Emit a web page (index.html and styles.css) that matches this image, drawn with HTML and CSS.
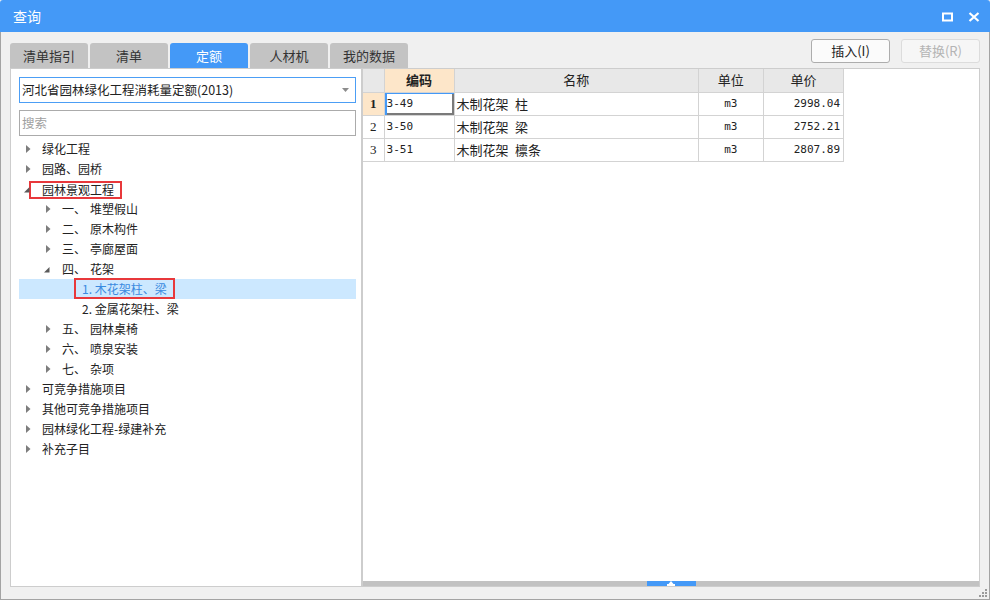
FILE: index.html
```html
<!DOCTYPE html>
<html lang="zh-CN">
<head>
<meta charset="utf-8">
<title>查询</title>
<link rel="stylesheet" href="styles.css">
</head>
<body>
<div class="window">
  <div class="titlebar">
    <span class="title">查询</span>
    <div class="tb-btns">
      <svg class="tb-icon" width="12" height="10" viewBox="0 0 12 10"><rect x="1" y="1.5" width="9" height="7" fill="none" stroke="#fff" stroke-width="2"/></svg>
      <svg class="tb-icon" width="12" height="10" viewBox="0 0 12 10"><path d="M1.5 1 L10.5 9 M10.5 1 L1.5 9" stroke="#fff" stroke-width="2.2"/></svg>
    </div>
  </div>
  <div class="main">
    <div class="toolbar">
      <div class="tabs">
        <div class="tab">清单指引</div>
        <div class="tab">清单</div>
        <div class="tab active">定额</div>
        <div class="tab">人材机</div>
        <div class="tab">我的数据</div>
      </div>
      <div class="actions">
        <button class="btn">插入(I)</button>
        <button class="btn disabled">替换(R)</button>
      </div>
    </div>
    <div class="content">
      <div class="left">
        <div class="combo">
          <span>河北省园林绿化工程消耗量定额(2013)</span>
          <svg width="7" height="4" viewBox="0 0 7 4"><path d="M0 0 L7 0 L3.5 4Z" fill="#8c8c8c"/></svg>
        </div>
        <div class="search">搜索</div>
        <div class="tree">
          <div class="row l0"><span class="tw"><svg class="closed" width="5" height="8" viewBox="0 0 5 8"><path d="M0 0 L4.5 4 L0 8Z" fill="#7d7d7d"/></svg></span><span>绿化工程</span></div>
          <div class="row l0"><span class="tw"><svg class="closed" width="5" height="8" viewBox="0 0 5 8"><path d="M0 0 L4.5 4 L0 8Z" fill="#7d7d7d"/></svg></span><span>园路、园桥</span></div>
          <div class="row l0"><span class="tw"><svg class="open" width="6" height="6" viewBox="0 0 6 6"><path d="M5.5 0 L5.5 5.5 L0 5.5Z" fill="#5a5a5a"/></svg></span><span class="mark mark-a">园林景观工程</span></div>
          <div class="row l1"><span class="tw"><svg class="closed" width="5" height="8" viewBox="0 0 5 8"><path d="M0 0 L4.5 4 L0 8Z" fill="#7d7d7d"/></svg></span><span class="num">一、</span><span>堆塑假山</span></div>
          <div class="row l1"><span class="tw"><svg class="closed" width="5" height="8" viewBox="0 0 5 8"><path d="M0 0 L4.5 4 L0 8Z" fill="#7d7d7d"/></svg></span><span class="num">二、</span><span>原木构件</span></div>
          <div class="row l1"><span class="tw"><svg class="closed" width="5" height="8" viewBox="0 0 5 8"><path d="M0 0 L4.5 4 L0 8Z" fill="#7d7d7d"/></svg></span><span class="num">三、</span><span>亭廊屋面</span></div>
          <div class="row l1"><span class="tw"><svg class="open" width="6" height="6" viewBox="0 0 6 6"><path d="M5.5 0 L5.5 5.5 L0 5.5Z" fill="#5a5a5a"/></svg></span><span class="num">四、</span><span>花架</span></div>
          <div class="row l2 selected"><span class="tw"></span><span class="mark mark-b">1. 木花架柱、梁</span></div>
          <div class="row l2"><span class="tw"></span><span>2. 金属花架柱、梁</span></div>
          <div class="row l1"><span class="tw"><svg class="closed" width="5" height="8" viewBox="0 0 5 8"><path d="M0 0 L4.5 4 L0 8Z" fill="#7d7d7d"/></svg></span><span class="num">五、</span><span>园林桌椅</span></div>
          <div class="row l1"><span class="tw"><svg class="closed" width="5" height="8" viewBox="0 0 5 8"><path d="M0 0 L4.5 4 L0 8Z" fill="#7d7d7d"/></svg></span><span class="num">六、</span><span>喷泉安装</span></div>
          <div class="row l1"><span class="tw"><svg class="closed" width="5" height="8" viewBox="0 0 5 8"><path d="M0 0 L4.5 4 L0 8Z" fill="#7d7d7d"/></svg></span><span class="num">七、</span><span>杂项</span></div>
          <div class="row l0"><span class="tw"><svg class="closed" width="5" height="8" viewBox="0 0 5 8"><path d="M0 0 L4.5 4 L0 8Z" fill="#7d7d7d"/></svg></span><span>可竞争措施项目</span></div>
          <div class="row l0"><span class="tw"><svg class="closed" width="5" height="8" viewBox="0 0 5 8"><path d="M0 0 L4.5 4 L0 8Z" fill="#7d7d7d"/></svg></span><span>其他可竞争措施项目</span></div>
          <div class="row l0"><span class="tw"><svg class="closed" width="5" height="8" viewBox="0 0 5 8"><path d="M0 0 L4.5 4 L0 8Z" fill="#7d7d7d"/></svg></span><span>园林绿化工程-绿建补充</span></div>
          <div class="row l0"><span class="tw"><svg class="closed" width="5" height="8" viewBox="0 0 5 8"><path d="M0 0 L4.5 4 L0 8Z" fill="#7d7d7d"/></svg></span><span>补充子目</span></div>
        </div>
      </div>
      <div class="right">
        <div class="grid-wrap">
          <table class="grid">
            <colgroup>
              <col class="c-idx"><col class="c-code"><col class="c-name"><col class="c-unit"><col class="c-price">
            </colgroup>
            <thead>
              <tr><th class="corner"></th><th class="hl">编码</th><th>名称</th><th>单位</th><th>单价</th></tr>
            </thead>
            <tbody>
              <tr><td class="idx hl-idx">1</td><td class="code focus">3-49</td><td class="name">木制花架&ensp;柱</td><td class="unit">m3</td><td class="price">2998.04</td></tr>
              <tr><td class="idx">2</td><td class="code">3-50</td><td class="name">木制花架&ensp;梁</td><td class="unit">m3</td><td class="price">2752.21</td></tr>
              <tr><td class="idx">3</td><td class="code">3-51</td><td class="name">木制花架&ensp;檩条</td><td class="unit">m3</td><td class="price">2807.89</td></tr>
            </tbody>
          </table>
        </div>
        <div class="hbar">
          <div class="splitter"><svg width="8" height="5" viewBox="0 0 8 5"><path d="M4 0 L6.5 3 L8 3 L8 5 L0 5 L0 3 L1.5 3Z" fill="#fff"/></svg></div>
        </div>
      </div>
    </div>
  </div>
  <svg class="grip" width="9" height="9" viewBox="0 0 9 9">
    <rect x="6" y="0" width="2" height="2" fill="#9a9a9a"/>
    <rect x="3" y="3" width="2" height="2" fill="#9a9a9a"/><rect x="6" y="3" width="2" height="2" fill="#9a9a9a"/>
    <rect x="0" y="6" width="2" height="2" fill="#9a9a9a"/><rect x="3" y="6" width="2" height="2" fill="#9a9a9a"/><rect x="6" y="6" width="2" height="2" fill="#9a9a9a"/>
  </svg>
</div>
</body>
</html>
```

FILE: styles.css
```css
* { box-sizing: border-box; }
html, body { margin: 0; padding: 0; }
body {
  font-family: "Noto Sans CJK SC", "Noto Sans", "Liberation Sans", sans-serif;
  color: #222;
  background: #f0f0f0;
}
.window {
  position: relative;
  width: 990px;
  height: 600px;
  display: flex;
  flex-direction: column;
  overflow: hidden;
  border-radius: 3px 3px 0 0;
}
.titlebar {
  height: 32px;
  flex: none;
  background: #4499f7;
  display: flex;
  align-items: center;
  padding-left: 13px;
  padding-right: 10px;
  color: #fff;
}
.title { font-size: 14px; line-height: 16px; }
.tb-btns { margin-left: auto; display: flex; gap: 14px; align-items: center; padding-top: 1px; }
.tb-icon { display: block; }

.main {
  flex: 1;
  display: flex;
  flex-direction: column;
  background: #f0f0f0;
  border: 1px solid #a3a3a3;
  border-top: none;
  padding: 0 9px 12px 9px;
}
.toolbar {
  height: 36px;
  flex: none;
  display: flex;
  align-items: flex-start;
}
.tabs { display: flex; gap: 2px; margin-top: 11px; }
.tab {
  width: 78px;
  height: 25px;
  background: #c3c3c3;
  border-radius: 3px 3px 0 0;
  font-size: 13px;
  line-height: 25px;
  text-align: center;
  color: #333;
}
.tab.active { background: #4499f7; color: #fff; }
.actions { margin-left: auto; display: flex; gap: 11px; margin-top: 7px; }
.btn {
  width: 79px;
  height: 24px;
  border: 1px solid #adadad;
  border-radius: 3px;
  background: #fbfbfb;
  font-family: inherit;
  font-size: 13px;
  line-height: 20px;
  color: #222;
  padding: 0;
}
.btn.disabled { border-color: #dcdcdc; color: #b4b4b4; background: #f6f6f6; }

.content {
  flex: 1;
  display: flex;
  min-height: 0;
}
.left {
  width: 352px;
  flex: none;
  background: #fff;
  border: 1px solid #cdcdcd;
  padding: 8px 5px 0 8px;
}
.combo {
  height: 26px;
  border: 1px solid #4c9ef5;
  display: flex;
  align-items: center;
  padding: 0 6px 0 2px;
  font-size: 12.5px;
  line-height: 16px;
  color: #222;
}
.combo svg { margin-left: auto; display: block; }
.search {
  margin-top: 7px;
  height: 26px;
  border: 1px solid #ababab;
  font-size: 12.5px;
  line-height: 24px;
  padding-left: 2px;
  color: #a0a0a0;
}
.tree { margin-top: 3px; }
.row {
  height: 20px;
  display: flex;
  align-items: center;
  font-size: 12px;
  line-height: 16px;
  white-space: nowrap;
  color: #222;
}
.row.l1 { padding-left: 20px; }
.row.l2 { padding-left: 40px; }
.row.selected { background: #cce8ff; color: #3a8ae0; }
.tw { width: 23px; flex: none; height: 20px; position: relative; display: block; }
.tw .closed { position: absolute; left: 7px; top: 6px; }
.tw .open { position: absolute; left: 5px; top: 8px; }
.num { width: 28px; flex: none; }
.mark {
  display: inline-block;
  border: 2px solid #e8383b;
}
.mark-a {
  height: 18px;
  line-height: 14px;
  padding: 0 6px 0 11px;
  margin-left: -13px;
  margin-top: 2px;
}
.mark-b {
  height: 21px;
  line-height: 17px;
  padding: 0 6px 0 6px;
  margin-left: -8px;
  margin-top: -1px;
}

.right {
  flex: 1;
  min-width: 0;
  background: #fff;
  border: 1px solid #cdcdcd;
  display: flex;
  flex-direction: column;
}
.grid-wrap { flex: 1; }
.grid {
  border-collapse: collapse;
  table-layout: fixed;
  width: 481px;
  font-size: 13px;
}
.c-idx { width: 21px; }
.c-code { width: 70px; }
.c-name { width: 244px; }
.c-unit { width: 65px; }
.c-price { width: 80px; }
.grid th, .grid td {
  border: 1px solid #d3d3d3;
  height: 23px;
  padding: 0;
  line-height: 16px;
  white-space: nowrap;
  overflow: hidden;
}
.grid tr:first-child th { border-top: none; }
.grid tr th:first-child, .grid tr td:first-child { border-left: none; }
.grid th {
  background: #e8e8e8;
  font-weight: normal;
  color: #222;
  text-align: center;
}
.grid th.hl { background: #fde6c9; font-weight: bold; }
.grid th.corner { background: #e8e8e8; }
.grid td.idx {
  text-align: center;
  font-family: "Liberation Serif", "DejaVu Serif", serif;
  font-size: 13px;
  color: #222;
}
.grid td.hl-idx { background: #fde6c9; font-weight: bold; }
.grid td.code {
  font-family: "DejaVu Sans Mono", "Liberation Mono", monospace;
  font-size: 11px;
  padding-left: 2px;
}
.grid td.focus { box-shadow: inset 2px 1px 0 #4499f7, inset -2px -2px 0 #7a7a7a; }
.grid td.name { padding-left: 2px; }
.grid td.unit {
  text-align: center;
  font-family: "DejaVu Sans Mono", "Liberation Mono", monospace;
  font-size: 11px;
}
.grid td.price {
  text-align: right;
  padding-right: 3px;
  font-family: "DejaVu Sans Mono", "Liberation Mono", monospace;
  font-size: 11px;
}
.hbar {
  height: 5px;
  flex: none;
  background: #c2c2c2;
  display: flex;
  justify-content: center;
}
.splitter {
  width: 49px;
  height: 5px;
  background: #4499f7;
  display: flex;
  justify-content: center;
  align-items: flex-end;
}
.splitter svg { display: block; }
.grip { position: absolute; right: 2px; bottom: 2px; }
```
